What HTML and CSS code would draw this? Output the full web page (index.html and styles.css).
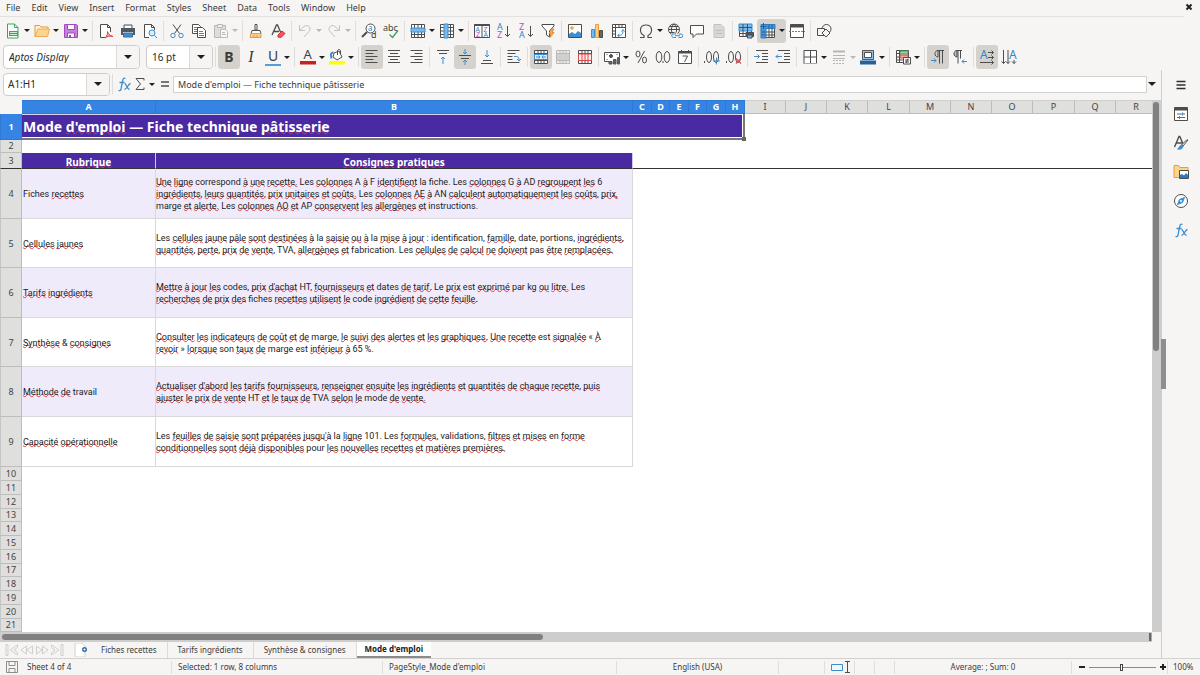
FILE: index.html
```
<!DOCTYPE html>
<html lang="fr">
<head>
<meta charset="utf-8">
<title>Fiche technique pâtisserie</title>
<link rel="stylesheet" href="styles.css">
</head>
<body>
<svg class="sprite" aria-hidden="true">
  <symbol id="new" viewBox="0 0 16 16"><path d="M2.500 1h7l3.500 3.500v10.500H2.500z" fill="#fff" stroke="#3fa45b"/><path d="M9.500 1v3.500H13" stroke="#3fa45b"/><path d="M4 8h9v5H4z" fill="#3fa45b" stroke="none"/><path d="M5 9.500h7M5 11.500h7" stroke="#c9efd2"/></symbol>
  <symbol id="open" viewBox="0 0 16 16"><path d="M1 13.500V2.500h4.500l1.500 1.500h7v2" fill="#fdf0d8" stroke="#e8963a"/><path d="M1 13.500L4 6h11.500l-2 7.500z" fill="#fbd58c" stroke="#f0a955"/></symbol>
  <symbol id="save" viewBox="0 0 16 16"><path d="M1.500 1.500h12l1 1v12h-13z" fill="#c77fdc" stroke="#a349be"/><path d="M4.500 1.500h7v5h-7z" fill="#fff" stroke="#a349be"/><path d="M4.500 10h7v4.500h-7z" fill="#fff" stroke="#a349be"/><path d="M6 12h2v2H6z" fill="#a349be" stroke="none"/></symbol>
  <symbol id="pdf" viewBox="0 0 16 16"><path d="M8 14.500H2.500v-13h7l3 3V9" fill="#fff"/><path d="M9.500 1.500v3h3"/><path d="M7 15c2-2 3-4 2.500-6.500C10 11 12 13 15 13.500 12 12.500 9 13.500 7 15z" fill="#f7b4b8" stroke="#dc3a45"/></symbol>
  <symbol id="print" viewBox="0 0 16 16"><path d="M4 5V2h8v3" fill="#fff"/><path d="M1 5h14v7H1z" fill="#50585e" stroke="none"/><path d="M3 9.500h10" stroke="#fff"/><path d="M3.500 10h9v4h-9z" fill="#3d8ed0" stroke="#3d6f99"/></symbol>
  <symbol id="preview" viewBox="0 0 16 16"><path d="M7 14.500H2.500v-13h7l3 3V7" fill="#fff"/><path d="M9.500 1.500v3h3"/><circle cx="10" cy="10" r="3" fill="#d9edfb" stroke="#3d8ed0"/><path d="M12.500 12.500l2.500 2.500" stroke="#3d8ed0"/></symbol>
  <symbol id="cut" viewBox="0 0 16 16"><path d="M4 1.500l6.500 9M12 1.500l-6.500 9"/><circle cx="4" cy="12.500" r="2.200" stroke="#3d8ed0"/><circle cx="12" cy="12.500" r="2.200" stroke="#3d8ed0"/></symbol>
  <symbol id="copy" viewBox="0 0 16 16"><path d="M1.500 1.500h6l2 2v7h-8z" fill="#fff"/><path d="M3 4.500h4M3 6.500h4M3 8.500h4" stroke="#3d8ed0"/><path d="M6.500 4.500h5l3 3v7h-8z" fill="#fff"/><path d="M8 8.500h4M8 10.500h5M8 12.500h5" stroke="#3d8ed0"/></symbol>
  <symbol id="paste" viewBox="0 0 16 16"><path d="M1.500 2.500h11v12h-11z" fill="#ddd" stroke="#b8b8b8"/><path d="M4.500 1.500h5v3h-5z" fill="#eee" stroke="#b8b8b8"/><path d="M7.500 6.500h5l2 2v6h-7z" fill="#f7f7f7" stroke="#bbb"/><path d="M9 9.500h3M9 11.500h4" stroke="#bbb"/></symbol>
  <symbol id="brush" viewBox="0 0 16 16"><path d="M7 1.500h2V7H7z" fill="#fff"/><path d="M4 7.500h8l1 3H3z" fill="#fff"/><path d="M3 10.500h10v4H2z" fill="#f8cf86" stroke="#ef9a3b"/><path d="M6 14v-2M9 14v-2" stroke="#ef9a3b"/></symbol>
  <symbol id="clear" viewBox="0 0 16 16"><path d="M2 12L6.500 2h1l3 7M4 8.500h5" stroke-width="1.300"/><path d="M8 12l4-4 3 2.500-4 4-3-.5z" fill="#ee5a62" stroke="#c9303a"/></symbol>
  <symbol id="undo" viewBox="0 0 16 16"><path d="M2.500 2v5.500H8M2.500 7.500L7 3.500c4-3 8 2 5 5L7 14" stroke="#c2c2c0"/></symbol>
  <symbol id="redo" viewBox="0 0 16 16"><path d="M13.500 2v5.500H8M13.500 7.500L9 3.500c-4-3-8 2-5 5L9 14" stroke="#c2c2c0"/></symbol>
  <symbol id="find" viewBox="0 0 16 16"><circle cx="9.500" cy="5.500" r="4.500" fill="#fff"/><path d="M6 9l-5 5" stroke-width="2"/><text x="7" y="8" class="g-blue" font-size="8">a</text><text x="10" y="15" class="g-dark" font-size="9">d</text></symbol>
  <symbol id="spell" viewBox="0 0 16 16"><text x="0" y="8" class="g-dark" font-size="9">abc</text><path d="M6.500 11.500l3 3 5.500-7" stroke="#36a35c" stroke-width="1.300"/></symbol>
  <symbol id="row" viewBox="0 0 16 16"><path d="M1.500 1.500h13v13h-13z" fill="#fff"/><path d="M1.500 11.500h13M4.500 1.500v13M8 1.500v13M11.500 1.500v13"/><path d="M1 5h14v4H1z" fill="#7ab9ee" stroke="#3d8ed0"/></symbol>
  <symbol id="col" viewBox="0 0 16 16"><path d="M1.500 1.500h13v13h-13z" fill="#fff"/><path d="M1.500 4.500h13M1.500 8h13M1.500 11.500h13M11.500 1.500v13"/><path d="M5 1h4v14H5z" fill="#7ab9ee" stroke="#3d8ed0"/></symbol>
  <symbol id="sort" viewBox="0 0 16 16"><path d="M.5 1.500h15v13H.5zM8 2v12" fill="#fff"/><path d="M.5 2h15" stroke-width="2"/><text x="1.500" y="8.500" class="g-blue" font-size="7">A</text><text x="2" y="14.300" class="g-pink" font-size="7">Z</text><text x="9.500" y="8.500" class="g-pink" font-size="7">Z</text><text x="9.500" y="14.300" class="g-blue" font-size="7">A</text></symbol>
  <symbol id="az" viewBox="0 0 16 16"><text x="1" y="7" class="g-blue" font-size="9">A</text><text x="1" y="15" class="g-pink" font-size="9">Z</text><path d="M11.500 3v10.500M9 11l2.500 2.500L14 11"/></symbol>
  <symbol id="za" viewBox="0 0 16 16"><text x="1" y="7" class="g-pink" font-size="9">Z</text><text x="1" y="15" class="g-blue" font-size="9">A</text><path d="M12.500 3v10.500M10 11l2.500 2.500L15 11"/></symbol>
  <symbol id="filter" viewBox="0 0 16 16"><path d="M2 1.500h12V3L9.500 8v6l-3-2V8L2 3z" fill="#fff"/><path d="M12 6l-3 4.500h2l-1 4 4-5h-2l2-3.500z" fill="#f6b35c" stroke="#e88b2d"/></symbol>
  <symbol id="image" viewBox="0 0 16 16"><path d="M1.500 1.500h13v13h-13z" fill="#fff"/><path d="M2 14v-3l3-2 3 2 3-3 3 2v4z" fill="#3d8ed0" stroke="none"/><circle cx="5" cy="5" r="1.300" fill="#f8cf86" stroke="#ef9a3b"/></symbol>
  <symbol id="chart" viewBox="0 0 16 16"><path d="M2.500 6.500h3v8h-3z" fill="#7ab9ee" stroke="#3d8ed0"/><path d="M6.500 1.500h3v13h-3z" fill="#f8cf86" stroke="#ef9a3b"/><path d="M10.500 7.500h3v7h-3z" fill="#666"/></symbol>
  <symbol id="pivot" viewBox="0 0 16 16"><path d="M1.500 1.500h13v13h-13z" fill="#fff"/><path d="M1.500 4.500h13M4.500 1.500v13M8 1.500v3M11 1.500v3M1.500 8h3M1.500 11h3"/><path d="M7 12.500c4 0 5-1 5-5.500M10.500 8.500L12 6.500l1.500 2M8.500 11L6.500 12.500l2 1.500" stroke="#3d8ed0"/></symbol>
  <symbol id="omega" viewBox="0 0 16 16"><path d="M2 14.500h4v-2C1 10 1 2 8 2s7 8 2 10.500v2h4" stroke-width="1.200"/></symbol>
  <symbol id="link" viewBox="0 0 16 16"><circle cx="7" cy="6.500" r="5.500"/><path d="M1.500 6.500h11M7 1c-3.500 3-3.500 8 0 11M7 1c3.500 3 3.500 8 0 11M2.500 3.500h9M2.500 9.500h5"/><path d="M4.500 10.500h11v4h-11z" fill="#f6f5f4" stroke="none"/><path d="M9 11H6.500a1.700 1.700 0 000 3.500H9M11.500 11H14a1.700 1.700 0 010 3.500h-2.500M8 12.700h5" stroke="#3d8ed0"/></symbol>
  <symbol id="comment" viewBox="0 0 16 16"><path d="M1.500 2.500h13v8.500H7.500L4 14.500V11H1.500z" fill="#fff"/></symbol>
  <symbol id="header" viewBox="0 0 16 16"><path d="M3 1.500h7l3 3v10H3z" fill="#d8d8d6" stroke="#c2c2c0"/><path d="M5 7.500h6M5 10.500h6" stroke="#bcbcba"/></symbol>
  <symbol id="area" viewBox="0 0 16 16"><path d="M1.500 1.500h12v12h-12z" fill="#fff"/><path d="M1 1h13v7H1z" fill="#7ab9ee" stroke="#3d8ed0"/><path d="M1 4.500h13M5 1v12M9.500 1v12M1 10.500h12"/><path d="M8 9.500h7.500v4H8z" fill="#50585e"/><path d="M9.500 12h4.500v3H9.500z" fill="#7ab9ee"/></symbol>
  <symbol id="freeze" viewBox="0 0 16 16"><path d="M1.500 1.500h13v13h-13z" fill="#fff"/><path d="M1 1.500h14v4H6v9.500H1z" fill="#4596da" stroke="#2a7bc0"/><path d="M6 9h9M6 12h9M9 5.500v9.500M12 5.500v9.500"/><path d="M3.500 0v6M0.500 3.500h6M9 2v3M12 2v3M2 9h3M2 12h3" stroke="#1c5f9c"/></symbol>
  <symbol id="split" viewBox="0 0 16 16"><path d="M1.500 1.500h13v13h-13z" fill="#fff"/><path d="M1.500 3h13" stroke-width="3"/><path d="M0 8.500h16" stroke="#3d8ed0" stroke-dasharray="2 1"/></symbol>
  <symbol id="shapes" viewBox="0 0 16 16"><circle cx="10.500" cy="6" r="4.500"/><path d="M1.500 5.500h7v7h-7z" fill="#f6f5f4"/><path d="M10 6l4 4-4 4-4-4z" fill="#f6f5f4"/></symbol>

  <symbol id="fcolor" viewBox="0 0 16 16"><text x="3.500" y="10" class="g-dark" font-size="13">A</text><path d="M0 12h16v3.500H0z" fill="#c9211e" stroke="none"/></symbol>
  <symbol id="bcolor" viewBox="0 0 16 16"><path d="M5 4l5-2 3 6-5 3-4-3z" fill="#fff"/><path d="M8.500 6V2c0-2 3-2 3 0v3"/><path d="M4.500 3.500c-3 0-3 2-2 6" stroke="#3d8ed0" stroke-width="2"/><path d="M0 12h16v3.500H0z" fill="#ffff00" stroke="none"/></symbol>
  <symbol id="left" viewBox="0 0 16 16"><path d="M1.500 1.500h12M1.500 4.500h8M1.500 7.500h12M1.500 10.500h8M1.500 13.500h12"/></symbol>
  <symbol id="center" viewBox="0 0 16 16"><path d="M2 1.500h12M4 4.500h8M2 7.500h12M4 10.500h8M2 13.500h12"/></symbol>
  <symbol id="right" viewBox="0 0 16 16"><path d="M2.500 1.500h12M6.500 4.500h8M2.500 7.500h12M6.500 10.500h8M2.500 13.500h12"/></symbol>
  <symbol id="top" viewBox="0 0 16 16"><path d="M2 1.500h12M4 4.500h8"/><path d="M8 15V8M6 10l2-2 2 2" stroke="#3d8ed0"/></symbol>
  <symbol id="middle" viewBox="0 0 16 16"><path d="M2 6.500h12M4 9.500h8"/><path d="M8 0v5M6 3l2 2 2-2M8 16v-5M6 13l2-2 2 2" stroke="#3d8ed0"/></symbol>
  <symbol id="bottom" viewBox="0 0 16 16"><path d="M2 14.500h12M4 11.500h8"/><path d="M8 1v7M6 6l2 2 2-2" stroke="#3d8ed0"/></symbol>
  <symbol id="wrap" viewBox="0 0 16 16"><path d="M1.500 1.500h12M1.500 4.500h8M1.500 7.500h5M1.500 10.500h5M1.500 13.500h12"/><path d="M8 7.500h2.500c2 0 2.500 1 2.500 4M11 10l2 2 2-2" stroke="#3d8ed0"/></symbol>
  <symbol id="merge" viewBox="0 0 16 16"><path d="M1.500 1.500h13v13h-13zM1.500 4.500h13M1.500 11.500h13M5 1.500v3M8 1.500v3M11 1.500v3M5 11.500v3M8 11.500v3M11 11.500v3" fill="#fff"/><path d="M1.500 5.500h13v5h-13zM3 8h4M5.500 6.500L7 8l-1.500 1.500M13 8H9M10.500 6.500L9 8l1.500 1.500" fill="#d9edfb" stroke="#3d8ed0"/></symbol>
  <symbol id="merge2" viewBox="0 0 16 16"><path d="M1.500 1.500h13v13h-13zM1.500 4.500h13M1.500 11.500h13M5 1.500v3M8 1.500v3M11 1.500v3M5 11.500v3M8 11.500v3M11 11.500v3" fill="#eee" stroke="#b8b8b6"/><path d="M2 5h12v6H2z" fill="#d0d0ce" stroke="none"/></symbol>
  <symbol id="unmerge" viewBox="0 0 16 16"><path d="M1.500 1.500h13v13h-13zM1.500 4.500h13M1.500 11.500h13M5 1.500v3M8 1.500v3M11 1.500v3M5 11.500v3M8 11.500v3M11 11.500v3" fill="#fff"/><path d="M1.500 5h13v6.500h-13zM5 5v6.500M8 5v6.500M11 5v6.500" fill="#fdeaea" stroke="#dc4a50"/></symbol>
  <symbol id="money" viewBox="0 0 16 16"><path d="M5 12.500H.5v-9h15V8" fill="#fff"/><circle cx="7" cy="7" r="1.500" fill="#555"/><path d="M2.500 5.500h1M12.500 5.500h1M2.500 10.500h1"/><path d="M5 12.500h3V15H5zM9.500 10.500h2.500v4.500H9.500zM13.500 8.500h2V15h-2z" fill="#666" stroke="#555"/></symbol>
  <symbol id="percent" viewBox="0 0 16 16"><ellipse cx="5" cy="5" rx="2" ry="3"/><ellipse cx="11.500" cy="11" rx="2" ry="3"/><path d="M11.500 2L5 14"/></symbol>
  <symbol id="number" viewBox="0 0 16 16"><ellipse cx="4" cy="8" rx="2.800" ry="5.500"/><ellipse cx="12" cy="8" rx="2.800" ry="5.500"/><path d="M8 12v2"/></symbol>
  <symbol id="date" viewBox="0 0 16 16"><path d="M1.500 2.500h13v12h-13z" fill="#fff"/><path d="M1.500 3.500h13" stroke-width="2"/><path d="M4.500 1v3M11.500 1v3M5.500 7h5L7.500 13"/></symbol>
  <symbol id="adddec" viewBox="0 0 16 16"><path d="M.5 12v2"/><ellipse cx="5" cy="8" rx="2.500" ry="5.500"/><ellipse cx="12" cy="8" rx="2.500" ry="5.500"/><path d="M12.500 8.500v7M9 12h7" stroke="#3d8ed0"/></symbol>
  <symbol id="deldec" viewBox="0 0 16 16"><path d="M.5 12v2"/><ellipse cx="5" cy="8" rx="2.500" ry="5.500"/><ellipse cx="12" cy="8" rx="2.500" ry="5.500"/><path d="M10 9.500l5 5M15 9.500l-5 5" stroke="#e04a50" stroke-width="1.200"/></symbol>
  <symbol id="indent" viewBox="0 0 16 16"><path d="M3 1.500h12M9 4.500h6M9 7.500h6M9 10.500h6M3 13.500h12"/><path d="M1 7.500h5.500M4.500 5.500l2 2-2 2" stroke="#3d8ed0"/></symbol>
  <symbol id="outdent" viewBox="0 0 16 16"><path d="M3 1.500h12M9 4.500h6M9 7.500h6M9 10.500h6M3 13.500h12"/><path d="M7 7.500H1M3 5.500l-2 2 2 2" stroke="#3d8ed0"/></symbol>
  <symbol id="borders" viewBox="0 0 16 16"><path d="M2 14.500V1.500h12.500v13M8.500 1.500v13M2 8h12.500" fill="#fff"/><path d="M1.500 14.500h13.500" stroke="#ef9a3b"/></symbol>
  <symbol id="lines" viewBox="0 0 16 16"><path d="M2 2.500h12" stroke="#b5b5b3" stroke-width="2"/><path d="M2 6.500h12M2 9.500h12" stroke="#b5b5b3"/><path d="M2 11.500h12M2 14.500h12" stroke="#b5b5b3" stroke-dasharray="2 1"/></symbol>
  <symbol id="bordcolor" viewBox="0 0 16 16"><path d="M2.500 1.500h11v9h-11z" fill="#8fc4ef" stroke="#555"/><path d="M4.500 3.500h7v5h-7z" fill="#fff"/><path d="M0 11.500h16v4H0z" fill="#2a6099" stroke="none"/></symbol>
  <symbol id="cond" viewBox="0 0 16 16"><path d="M1.500 1.500h12v12h-12z" fill="#fff"/><path d="M5 2h8v3H5z" fill="#8ed8a2" stroke="#36a35c"/><path d="M5 6h8v3H5z" fill="#f7a2a5" stroke="#dc4a50"/><path d="M2 4.500h3M2 8h3M2 11h6M4.500 2v11"/><path d="M8.500 8.500h7v6.500h-7z" fill="#fff"/><path d="M10 11h4M10 13h4M13 9.500l-2 4.500"/></symbol>
  <symbol id="ltr" viewBox="0 0 16 16"><path d="M14 1.500H8c-4 0-4 6.500 0 6.500V1.500M9.500 1.500v13M12.500 1.500v13"/><path d="M1 11.500h5M4 9.500l2 2-2 2" stroke="#3d8ed0"/></symbol>
  <symbol id="rtl" viewBox="0 0 16 16"><path d="M10 1.500H5C1 1.500 1 8 5 8V1.500" fill="#bbb"/><path d="M6 1.500v13M8.500 1.500v8"/><path d="M15 12.500h-5M12 10.500l-2 2 2 2" stroke="#3d8ed0"/></symbol>
  <symbol id="horiz" viewBox="0 0 16 16"><text x="1" y="10" class="g-blue" font-size="12">A</text><path d="M9 3.500h5.500M12.500 1.500l2 2-2 2M9 8.500h5.500M12.500 6.500l2 2-2 2M1 13.500h13.500M12.500 11.500l2 2-2 2"/></symbol>
  <symbol id="vert" viewBox="0 0 16 16"><text x="8" y="10" class="g-blue" font-size="12">A</text><path d="M2.500 1v13.500M.5 12.500l2 2 2-2M7 1v13.500M5 12.500l2 2 2-2M13 11v3.500M11 12.500l2 2 2-2"/></symbol>

  <symbol id="fx" viewBox="0 0 16 16"><path d="M9.500 2.500c-2-1-2.500.5-3 3L5 13c-.4 1.500-1.200 2-2.500 1.500M3.500 6.500h5M8.500 7.500c2 0 2.500 6 5 6M14.500 7.500c-2 0-4 6-6 6" stroke="#3d8ed0" stroke-width="1.300"/></symbol>
  <symbol id="sigma" viewBox="0 0 16 16"><path d="M12 4.500v-2H4L8.500 8 4 13.500h8v-2"/></symbol>
  <symbol id="equal" viewBox="0 0 16 16"><path d="M4 6h8M4 10h8" stroke-width="1.600"/></symbol>
  <symbol id="ham" viewBox="0 0 16 16"><path d="M3.500 4.500h9M3.500 8h9M3.500 11.500h9" stroke="#2e2e2e" stroke-width="1.400"/></symbol>
  <symbol id="props" viewBox="0 0 16 16"><path d="M1.500 1.500h13v13h-13z" fill="#fff"/><path d="M1.500 3h13" stroke-width="3"/><path d="M4 8h8M4 11.500h8" stroke="#666"/><path d="M9.500 6.500v3M6.500 10v3" stroke="#3d8ed0"/></symbol>
  <symbol id="styles" viewBox="0 0 16 16"><path d="M1.500 12L6 1.500h.8L10.500 10M3 8h6" stroke-width="1.400"/><path d="M15 5l-5 6-1.500-1L13.500 5z" fill="#fff"/><path d="M10 11c0 3-3 3.500-5.500 3 2-.5 2-4 4-4z" fill="#3d8ed0" stroke="#3d8ed0"/></symbol>
  <symbol id="gallery" viewBox="0 0 16 16"><path d="M1 13.500V1.500h4.500L7 3.500h8v10z" fill="#fbd58c" stroke="#ef9a3b"/><path d="M6.500 6.500h9v8h-9z" fill="#fff"/><path d="M7 14v-3l2-1 2 1.500L13 9l2 2v3z" fill="#2a7bc0" stroke="none"/></symbol>
  <symbol id="nav" viewBox="0 0 16 16"><circle cx="8" cy="8" r="6.500" fill="#fff"/><path d="M11.500 4.500L9.500 9.500l-5 2 2-5z" fill="#3d8ed0" stroke="#3d8ed0"/><circle cx="8" cy="8" r="1" fill="#fff" stroke="none"/></symbol>
  <symbol id="disk" viewBox="0 0 16 16"><path d="M2.500 2.500h11v11h-11zM5 2.500v4h6v-4M5 13.500v-4h6v4" stroke="#8d8d8b"/></symbol>
</svg>

<nav class="menubar">
  <button>File</button><button>Edit</button><button>View</button><button>Insert</button><button>Format</button><button>Styles</button><button>Sheet</button><button>Data</button><button>Tools</button><button>Window</button><button>Help</button>
  <button class="close" aria-label="Close"><svg viewBox="0 0 8 8"><path d="M1.500 1.500l5 5M6.500 1.500l-5 5"/></svg></button>
</nav>

<div class="toolbar standard">
  <button class="tool drop" aria-label="New"><svg><use href="#new"/></svg></button>
  <button class="tool drop" aria-label="Open"><svg><use href="#open"/></svg></button>
  <button class="tool drop" aria-label="Save"><svg><use href="#save"/></svg></button>
  <i class="sep wide"></i>
  <button class="tool" aria-label="Export as PDF"><svg><use href="#pdf"/></svg></button>
  <button class="tool" aria-label="Print"><svg><use href="#print"/></svg></button>
  <button class="tool" aria-label="Print preview"><svg><use href="#preview"/></svg></button>
  <i class="sep"></i>
  <button class="tool" aria-label="Cut"><svg><use href="#cut"/></svg></button>
  <button class="tool" aria-label="Copy"><svg><use href="#copy"/></svg></button>
  <button class="tool drop off" aria-label="Paste"><svg><use href="#paste"/></svg></button>
  <i class="sep wide"></i>
  <button class="tool" aria-label="Clone formatting"><svg><use href="#brush"/></svg></button>
  <button class="tool" aria-label="Clear formatting"><svg><use href="#clear"/></svg></button>
  <i class="sep"></i>
  <button class="tool drop off" aria-label="Undo"><svg><use href="#undo"/></svg></button>
  <button class="tool drop off" aria-label="Redo"><svg><use href="#redo"/></svg></button>
  <i class="sep wide"></i>
  <button class="tool" aria-label="Find and replace"><svg><use href="#find"/></svg></button>
  <button class="tool" aria-label="Spelling"><svg><use href="#spell"/></svg></button>
  <i class="sep"></i>
  <button class="tool drop" aria-label="Row"><svg><use href="#row"/></svg></button>
  <button class="tool drop" aria-label="Column"><svg><use href="#col"/></svg></button>
  <i class="sep wide"></i>
  <button class="tool" aria-label="Sort"><svg><use href="#sort"/></svg></button>
  <button class="tool" aria-label="Sort ascending"><svg><use href="#az"/></svg></button>
  <button class="tool" aria-label="Sort descending"><svg><use href="#za"/></svg></button>
  <button class="tool" aria-label="AutoFilter"><svg><use href="#filter"/></svg></button>
  <i class="sep"></i>
  <button class="tool" aria-label="Image"><svg><use href="#image"/></svg></button>
  <button class="tool" aria-label="Chart"><svg><use href="#chart"/></svg></button>
  <button class="tool" aria-label="Pivot table"><svg><use href="#pivot"/></svg></button>
  <i class="sep"></i>
  <button class="tool drop" aria-label="Special character"><svg><use href="#omega"/></svg></button>
  <button class="tool" aria-label="Hyperlink"><svg><use href="#link"/></svg></button>
  <button class="tool" aria-label="Comment"><svg><use href="#comment"/></svg></button>
  <button class="tool" aria-label="Headers and footers"><svg><use href="#header"/></svg></button>
  <i class="sep"></i>
  <button class="tool" aria-label="Print area"><svg><use href="#area"/></svg></button>
  <button class="tool drop on" aria-label="Freeze rows and columns"><svg><use href="#freeze"/></svg></button>
  <button class="tool" aria-label="Split window"><svg><use href="#split"/></svg></button>
  <i class="sep"></i>
  <button class="tool" aria-label="Draw functions"><svg><use href="#shapes"/></svg></button>
</div>

<div class="toolbar formatting">
  <div class="combo font"><input value="Aptos Display" aria-label="Font name"><button aria-label="Font list"></button></div>
  <div class="combo size"><input value="16 pt" aria-label="Font size"><button aria-label="Size list"></button></div>
  <i class="sep"></i>
  <button class="tool on letter bold">B</button>
  <button class="tool letter ital">I</button>
  <button class="tool drop letter under"><span>U</span></button>
  <i class="sep wide"></i>
  <button class="tool drop" aria-label="Font color"><svg><use href="#fcolor"/></svg></button>
  <button class="tool drop" aria-label="Background color"><svg><use href="#bcolor"/></svg></button>
  <i class="sep wide"></i>
  <button class="tool on" aria-label="Align left"><svg><use href="#left"/></svg></button>
  <button class="tool" aria-label="Center"><svg><use href="#center"/></svg></button>
  <button class="tool" aria-label="Align right"><svg><use href="#right"/></svg></button>
  <i class="sep"></i>
  <button class="tool" aria-label="Align top"><svg><use href="#top"/></svg></button>
  <button class="tool on" aria-label="Center vertically"><svg><use href="#middle"/></svg></button>
  <button class="tool" aria-label="Align bottom"><svg><use href="#bottom"/></svg></button>
  <i class="sep"></i>
  <button class="tool" aria-label="Wrap text"><svg><use href="#wrap"/></svg></button>
  <i class="sep"></i>
  <button class="tool on" aria-label="Merge and center"><svg><use href="#merge"/></svg></button>
  <button class="tool" aria-label="Merge cells"><svg><use href="#merge2"/></svg></button>
  <button class="tool" aria-label="Unmerge cells"><svg><use href="#unmerge"/></svg></button>
  <i class="sep"></i>
  <button class="tool drop" aria-label="Currency"><svg><use href="#money"/></svg></button>
  <button class="tool" aria-label="Percent"><svg><use href="#percent"/></svg></button>
  <button class="tool" aria-label="Number"><svg><use href="#number"/></svg></button>
  <button class="tool" aria-label="Date"><svg><use href="#date"/></svg></button>
  <i class="sep"></i>
  <button class="tool" aria-label="Add decimal place"><svg><use href="#adddec"/></svg></button>
  <button class="tool" aria-label="Delete decimal place"><svg><use href="#deldec"/></svg></button>
  <i class="sep"></i>
  <button class="tool" aria-label="Increase indent"><svg><use href="#indent"/></svg></button>
  <button class="tool" aria-label="Decrease indent"><svg><use href="#outdent"/></svg></button>
  <i class="sep"></i>
  <button class="tool drop" aria-label="Borders"><svg><use href="#borders"/></svg></button>
  <button class="tool drop off" aria-label="Border style"><svg><use href="#lines"/></svg></button>
  <button class="tool drop" aria-label="Border color"><svg><use href="#bordcolor"/></svg></button>
  <i class="sep wide"></i>
  <button class="tool drop" aria-label="Conditional formatting"><svg><use href="#cond"/></svg></button>
  <i class="sep wide"></i>
  <button class="tool on" aria-label="Left to right"><svg><use href="#ltr"/></svg></button>
  <button class="tool" aria-label="Right to left"><svg><use href="#rtl"/></svg></button>
  <i class="sep"></i>
  <button class="tool on" aria-label="Horizontal text"><svg><use href="#horiz"/></svg></button>
  <button class="tool" aria-label="Vertical text"><svg><use href="#vert"/></svg></button>
</div>

<div class="workspace">
  <main class="document">
    <div class="formulabar">
      <div class="combo name"><input value="A1:H1" aria-label="Name box"><button aria-label="Names"></button></div>
      <i class="sep"></i>
      <button class="mini" aria-label="Function wizard"><svg><use href="#fx"/></svg></button>
      <button class="mini sum" aria-label="Select function"><svg><use href="#sigma"/></svg></button>
      <button class="mini" aria-label="Formula"><svg><use href="#equal"/></svg></button>
      <input class="formula" value="Mode d'emploi — Fiche technique pâtisserie" aria-label="Input line">
      <button class="expand" aria-label="Expand formula bar"></button>
    </div>

    <div class="sheetrow">
      <div class="sheet">
        <table>
          <colgroup><col class="c-num"><col class="c-a"><col class="c-b"><col class="c-s"><col class="c-t"><col class="c-s"><col class="c-t"><col class="c-s"><col class="c-s"><col class="c-n"><col class="c-n"><col class="c-n"><col class="c-w"><col class="c-n"><col class="c-n"><col class="c-n"><col class="c-w"><col class="c-n"><col class="c-n"><col></colgroup>
          <thead>
            <tr><th class="corner"></th><th class="sel">A</th><th class="sel">B</th><th class="sel">C</th><th class="sel">D</th><th class="sel">E</th><th class="sel">F</th><th class="sel">G</th><th class="sel">H</th><th>I</th><th>J</th><th>K</th><th>L</th><th>M</th><th>N</th><th>O</th><th>P</th><th>Q</th><th>R</th><th></th></tr>
          </thead>
          <tbody class="content">
            <tr class="r1"><th class="sel">1</th><td colspan="8" class="title">Mode <u>d'emploi</u> — Fiche technique <u>pâtisserie</u><span class="handle"></span></td><td colspan="11"></td></tr>
            <tr class="r2"><th>2</th><td colspan="19"></td></tr>
            <tr class="r3"><th>3</th><td class="head"><u>Rubrique</u></td><td class="head"><u>Consignes</u> <u>pratiques</u></td><td colspan="17"></td></tr>
            <tr class="tall even"><th>4</th><td class="cell">Fiches <u>recettes</u></td><td class="cell note"><u>Une</u> <u>ligne</u> correspond <u>à</u> <u>une</u> <u>recette.</u> Les <u>colonnes</u> A <u>à</u> F <u>identifient</u> la fiche. Les <u>colonnes</u> G <u>à</u> AD <u>regroupent</u> <u>les</u> 6<br><u>ingrédients</u>, <u>leurs</u> <u>quantités</u>, <u>prix</u> <u>unitaires</u> <u>et</u> <u>coûts.</u> Les <u>colonnes</u> <u>AE</u> <u>à</u> AN <u>calculent</u> <u>automatiquement</u> <u>les</u> <u>coûts</u>, <u>prix,</u><br>marge <u>et</u> <u>alerte.</u> Les <u>colonnes</u> <u>AO</u> <u>et</u> AP <u>conservent</u> <u>les</u> <u>allergènes</u> <u>et</u> instructions.</td><td colspan="17"></td></tr>
            <tr class="short"><th>5</th><td class="cell"><u>Cellules</u> <u>jaunes</u></td><td class="cell note">Les <u>cellules</u> <u>jaune</u> <u>pâle</u> <u>sont</u> <u>destinées</u> <u>à</u> la <u>saisie</u> <u>ou</u> <u>à</u> la <u>mise</u> <u>à</u> <u>jour</u> : identification, <u>famille</u>, date, portions, <u>ingrédients,</u><br><u>quantités</u>, <u>perte</u>, <u>prix</u> <u>de</u> <u>vente</u>, TVA, <u>allergènes</u> <u>et</u> fabrication. Les <u>cellules</u> <u>de</u> <u>calcul</u> <u>ne</u> <u>doivent</u> pas <u>être</u> <u>remplacées.</u></td><td colspan="17"></td></tr>
            <tr class="even tall"><th>6</th><td class="cell"><u>Tarifs</u> <u>ingrédients</u></td><td class="cell note"><u>Mettre</u> <u>à</u> <u>jour</u> <u>les</u> codes, <u>prix</u> <u>d'achat</u> HT, <u>fournisseurs</u> <u>et</u> dates <u>de</u> <u>tarif.</u> Le <u>prix</u> est <u>exprimé</u> par kg <u>ou</u> <u>litre.</u> Les<br><u>recherches</u> <u>de</u> <u>prix</u> <u>des</u> fiches <u>recettes</u> <u>utilisent</u> <u>le</u> code <u>ingrédient</u> <u>de</u> <u>cette</u> <u>feuille.</u></td><td colspan="17"></td></tr>
            <tr class="short"><th>7</th><td class="cell"><u>Synthèse</u> &amp; <u>consignes</u></td><td class="cell note"><u>Consulter</u> <u>les</u> <u>indicateurs</u> <u>de</u> <u>coût</u> <u>et</u> <u>de</u> marge, <u>le</u> <u>suivi</u> <u>des</u> <u>alertes</u> <u>et</u> <u>les</u> <u>graphiques.</u> <u>Une</u> <u>recette</u> est <u>signalée</u> « <u>À</u><br><u>revoir</u> » <u>lorsque</u> son <u>taux</u> <u>de</u> marge est <u>inférieur</u> <u>à</u> 65 %.</td><td colspan="17"></td></tr>
            <tr class="even tall"><th>8</th><td class="cell"><u>Méthode</u> <u>de</u> travail</td><td class="cell note"><u>Actualiser</u> <u>d'abord</u> <u>les</u> <u>tarifs</u> <u>fournisseurs</u>, <u>renseigner</u> <u>ensuite</u> <u>les</u> <u>ingrédients</u> <u>et</u> <u>quantités</u> <u>de</u> <u>chaque</u> <u>recette</u>, <u>puis</u><br><u>ajuster</u> <u>le</u> <u>prix</u> <u>de</u> <u>vente</u> HT <u>et</u> <u>le</u> <u>taux</u> <u>de</u> TVA <u>selon</u> <u>le</u> mode <u>de</u> <u>vente.</u></td><td colspan="17"></td></tr>
            <tr class="tall"><th>9</th><td class="cell"><u>Capacité</u> <u>opérationnelle</u></td><td class="cell note">Les <u>feuilles</u> <u>de</u> <u>saisie</u> <u>sont</u> <u>préparées</u> <u>jusqu'à</u> la <u>ligne</u> 101. Les <u>formules</u>, validations, <u>filtres</u> <u>et</u> <u>mises</u> en <u>forme</u><br><u>conditionnelles</u> <u>sont</u> <u>déjà</u> <u>disponibles</u> pour <u>les</u> <u>nouvelles</u> <u>recettes</u> <u>et</u> <u>matières</u> <u>premières.</u></td><td colspan="17"></td></tr>
          </tbody>
          <tbody class="blank">
            <tr><th>10</th><td colspan="19"></td></tr>
            <tr><th>11</th><td colspan="19"></td></tr>
            <tr><th>12</th><td colspan="19"></td></tr>
            <tr><th>13</th><td colspan="19"></td></tr>
            <tr><th>14</th><td colspan="19"></td></tr>
            <tr><th>15</th><td colspan="19"></td></tr>
            <tr><th>16</th><td colspan="19"></td></tr>
            <tr><th>17</th><td colspan="19"></td></tr>
            <tr><th>18</th><td colspan="19"></td></tr>
            <tr><th>19</th><td colspan="19"></td></tr>
            <tr><th>20</th><td colspan="19"></td></tr>
            <tr><th>21</th><td colspan="19"></td></tr>
          </tbody>
        </table>
      </div>
      <div class="vscroll"><div class="thumb"></div></div>
    </div>
    <div class="hscroll"><div class="thumb"></div><div class="grip"></div></div>
    <div class="tabs">
      <div class="tabnav">
        <button disabled aria-label="First sheet"><svg viewBox="0 0 14 12"><path d="M1 .5h2v11H1zM12.500 1v2.500L9 6l3.500 2.500V11L5 6z"/></svg></button>
        <button disabled aria-label="Previous sheet"><svg viewBox="0 0 14 12"><path d="M6.500 2v8L1 6zM12.500 2v8L7 6z"/></svg></button>
        <button disabled aria-label="Next sheet"><svg viewBox="0 0 14 12"><path d="M1.500 2v8L7 6zM7.500 2v8L13 6z"/></svg></button>
        <button disabled aria-label="Last sheet"><svg viewBox="0 0 14 12"><path d="M11 .5h2v11h-2zM1.500 1v2.500L5 6 1.500 8.500V11L9 6z"/></svg></button>
      </div>
      <button class="addsheet" aria-label="Add sheet"><svg viewBox="0 0 14 14"><path d="M1 0h7l3 3v11H1z" fill="#fff" stroke="#d0d0ce"/><circle cx="10.500" cy="6.500" r="2.500" fill="#2f6fb5" stroke="none"/><path d="M9.500 6.500h2M10.500 5.500v2" stroke="#fff"/></svg></button>
      <button class="tab">Fiches recettes</button>
      <button class="tab">Tarifs ingrédients</button>
      <button class="tab">Synthèse &amp; consignes</button>
      <button class="tab active">Mode d'emploi</button>
    </div>
  </main>
  <aside class="sidebar">
    <button class="pull" aria-label="Hide sidebar"></button>
    <button class="deck" aria-label="Sidebar settings"><svg><use href="#ham"/></svg></button>
    <button class="deck" aria-label="Properties"><svg><use href="#props"/></svg></button>
    <button class="deck" aria-label="Styles"><svg><use href="#styles"/></svg></button>
    <button class="deck" aria-label="Gallery"><svg><use href="#gallery"/></svg></button>
    <button class="deck" aria-label="Navigator"><svg><use href="#nav"/></svg></button>
    <button class="deck" aria-label="Functions"><svg><use href="#fx"/></svg></button>
  </aside>
</div>

<footer class="status">
  <span class="first"><svg><use href="#disk"/></svg>Sheet 4 of 4</span>
  <span>Selected: 1 row, 8 columns</span>
  <span>PageStyle_Mode d'emploi</span>
  <span class="mid">English (USA)</span>
  <span></span>
  <span class="mode"><svg viewBox="0 0 20 14"><path d="M1.500 4.500h11v6h-11z" stroke="#3d8ed0"/><path d="M15 1.500h5M17.500 1.500v11M15 12.500h5"/></svg></span>
  <span></span>
  <span></span>
  <span class="mid">Average: ; Sum: 0</span>
  <span class="zoom"><button aria-label="Zoom out"><svg viewBox="0 0 8 8"><path d="M1 4h6"/></svg></button><input type="range" min="0" max="100" value="49" aria-label="Zoom"><button aria-label="Zoom in"><svg viewBox="0 0 8 8"><path d="M1 4h6M4 1v6"/></svg></button></span>
  <span class="level">100%</span>
</footer>
</body>
</html>
```
FILE: styles.css
```
* { box-sizing: border-box; }
body {
  margin: 0;
  height: 100vh;
  display: flex;
  flex-direction: column;
  overflow: hidden;
  background: #f6f5f4;
  color: #3b3b3b;
  font: 9px/12px "Noto Sans", sans-serif;
}
button, input { font: inherit; color: inherit; margin: 0; padding: 0; border: 0; background: none; }
svg { fill: none; stroke: #4d4d4d; stroke-width: 1; flex: none; }
.sprite { display: none; }
text { stroke: none; font-family: "Noto Sans", sans-serif; }
.g-blue { fill: #2f86cc; }
.g-pink { fill: #b14fc6; }
.g-dark { fill: #3f3f3f; }

.menubar { display: flex; height: 17px; margin-right: 16px; padding-left: 6px; gap: 11px; border-bottom: 1px solid #e2e1df; }
.menubar .close { margin-left: auto; margin-right: -9px; }
.close svg { width: 8px; height: 8px; stroke: #222; stroke-width: 2; }

.toolbar { display: flex; align-items: center; height: 27px; flex: none; padding-left: 2px; }
.formatting { height: 26px; padding-left: 3px; }
.tool { display: flex; align-items: center; justify-content: center; width: 22px; height: 24px; flex: none; border-radius: 3px; }
.tool svg { width: 16px; height: 16px; }
.tool.on { background: #d5d1cd; }
.tool.drop { width: 29px; justify-content: flex-start; padding-left: 3px; }
.tool.drop::after, .sum::after, .combo button::after, .expand::after {
  content: "";
  border: 3px solid transparent;
  border-top-color: #1e1e1e;
  border-bottom: 0;
}
.tool.drop::after { margin-left: 3px; margin-right: -2px; }
.tool.off::after { border-top-color: #b8b8b6; }
.sep { flex: none; width: 5px; height: 20px; background: linear-gradient(#dedddb, #dedddb) 2px 0 / 1px 100% no-repeat; }
.sep.wide { width: 6px; background-position: 3px 0; }
.letter { font-size: 14px; line-height: 16px; }
.bold { font-weight: 700; }
.ital { font-family: "Liberation Serif", serif; font-style: italic; font-size: 16px; }
.under span { width: 16px; text-align: center; border-bottom: 2px solid #5a9bd8; }

.combo { display: flex; height: 24px; border: 1px solid #cfccc9; border-radius: 4px; background: #fff; overflow: hidden; }
.combo input { flex: 1; min-width: 0; padding-left: 5px; color: #2a2a2a; font-size: 10px; }
.combo button { display: flex; align-items: center; justify-content: center; width: 23px; background: #f6f5f4; border-left: 1px solid #dcdad7; }
.combo button::after, .expand::after { border-width: 4px 4px 0; }
.font { width: 137px; margin-right: 6px; }
.font input { font-style: italic; }
.size { width: 67px; }
.name { width: 107px; height: 23px; }
.name input { padding-left: 4px; }

.workspace { flex: 1; min-height: 0; display: flex; }
.document { flex: 1; min-width: 0; display: flex; flex-direction: column; }
.formulabar { display: flex; align-items: center; height: 30px; flex: none; padding: 0 4px 2px 3px; }
.formulabar .sep { margin-right: 1px; }
.mini { display: flex; align-items: center; width: 16px; flex: none; }
.mini svg { width: 16px; height: 16px; }
.sum { width: 25px; }
.sum::after { margin-left: 1px; }
.formula { flex: 1; min-width: 0; height: 17px; padding-left: 4px; background: #fff; border: 1px solid #d4d2cf; }
.expand { display: flex; justify-content: center; width: 10px; }

.sheetrow { flex: 1; min-height: 0; display: flex; }
.sheet { flex: 1; min-width: 0; overflow: hidden; background: #fff; }
table { table-layout: fixed; width: 100%; border-collapse: separate; border-spacing: 0; }
.c-num { width: 22px; }
.c-a { width: 134px; }
.c-b { width: 477px; }
.c-s { width: 19px; }
.c-t { width: 18px; }
.c-n { width: 41px; }
.c-w { width: 42px; }
th, td { padding: 0; overflow: hidden; white-space: nowrap; }
th { font-weight: 400; background: #dfdfde; border-right: 1px solid #bdbdbc; border-bottom: 1px solid #bdbdbc; color: #444; }
thead th { height: 14px; border-top: 1px solid #cfcfce; }
tbody th { border-left: 1px solid #c6c6c5; }
th.sel { background: #3584e4; color: #fff; font-weight: 700; border-color: #3079d3; }
th.corner { background: #f6f5f4; border-color: #f6f5f4; }
.r1 > * { height: 26px; }
.r2 > * { height: 13px; }
.r3 > * { height: 16px; border-bottom: 1px solid #333; }
.short > * { height: 49px; padding-top: 2px; }
.tall > * { height: 50px; }
.blank tr > * { height: 14px; }
.blank tr:nth-child(4n) > * { height: 13px; }
.title { position: relative; overflow: visible; padding: 2px 0 0 1px; background: #4a2aa2; color: #fff; font-size: 14px; line-height: 20px; font-weight: 700; border: solid #777; border-width: 0 2px 2px 0; box-shadow: inset -1px -1px #fff, inset 0 1px #d8d2ee; }
.handle { position: absolute; right: -3px; bottom: -3px; width: 4px; height: 4px; background: #666; }
.head { background: #4a2aa2; color: #fff; font-size: 10px; font-weight: 700; text-align: center; border-right: 1px solid #cfc8e6; }
.r3 .head { padding-top: 2px; }
.cell { padding-left: 1px; color: #1c1c1c; border-right: 1px solid #d9d9dc; border-bottom: 1px solid #d9d9dc; font-family: Roboto, "Noto Sans", sans-serif; }
.note { padding-left: 0; }
.even .cell { background: #f0ebfb; }
u { text-decoration: underline wavy #dc3c3c 1px; text-decoration-skip-ink: none; text-underline-offset: -2px; }

.vscroll { width: 9px; flex: none; padding: 2px 2px 0 1px; background: #cdcdcd; }
.vscroll .thumb { height: 47%; border-radius: 3px; background: #7f807f; }
.hscroll { display: flex; align-items: center; justify-content: space-between; height: 10px; flex: none; margin-right: 9px; padding-left: 2px; background: #cdcdcd; }
.hscroll .thumb { width: 47%; height: 6px; border-radius: 3px; background: #7f807f; }
.hscroll .grip { width: 3px; height: 8px; background: #666; border-right: 1px solid #aaa; }

.tabs { display: flex; height: 16px; flex: none; padding-left: 5px; font-size: 8px; }
.tabnav { display: flex; width: 62px; }
.tabnav button { width: 15px; }
.tabnav svg { width: 14px; height: 12px; stroke: #cfcfcd; display: block; }
.addsheet { width: 24px; padding-left: 7px; }
.addsheet svg { width: 14px; height: 14px; display: block; }
.tab { padding: 0 10px; border-right: 1px solid #dcdbd9; line-height: 14px; }
.tab.active { padding: 0 8px; background: #fff; font-weight: 700; color: #222; border-right: 0; border-bottom: 2px solid #8b8b8a; }

.sidebar { position: relative; width: 39px; flex: none; display: flex; flex-direction: column; align-items: center; border-left: 1px solid #cfcecc; }
.deck { display: flex; align-items: center; justify-content: center; width: 28px; height: 29px; }
.deck svg { width: 16px; height: 16px; }
.pull { position: absolute; left: -1px; top: 269px; width: 5px; height: 50px; background: #8f8f8e; }

.status { display: grid; grid-template-columns: minmax(0, 171fr) minmax(0, 211fr) minmax(0, 234fr) minmax(0, 162fr) minmax(0, 46fr) minmax(0, 30fr) minmax(0, 20fr) minmax(0, 20fr) minmax(0, 177fr) minmax(0, 96fr) minmax(0, 33fr); height: 17px; flex: none; align-items: center; border-top: 1px solid #d2d1cf; font-size: 8px; }
.status > span { display: flex; align-items: center; height: 13px; padding-left: 6px; border-left: 1px solid #e0dfdd; white-space: nowrap; }
.status .first { border-left: 0; padding-left: 4px; gap: 7px; }
.status svg { width: 16px; height: 16px; }
.status .mode { padding-left: 5px; }
.status .mode svg { width: 20px; height: 14px; }
.status .mid { justify-content: center; padding: 0; }
.status .level { padding-left: 5px; }
.zoom button { display: flex; }
.status .zoom svg { width: 8px; height: 8px; stroke: #222; stroke-width: 2; }
.zoom input { -webkit-appearance: none; appearance: none; flex: 1; min-width: 0; margin: 0 3px; height: 8px; background: linear-gradient(#8a8a89, #8a8a89) 0 4px / 100% 1px no-repeat; }
.zoom input::-webkit-slider-thumb { -webkit-appearance: none; width: 3px; height: 7px; background: #fff; border: 1px solid #444; }
```
